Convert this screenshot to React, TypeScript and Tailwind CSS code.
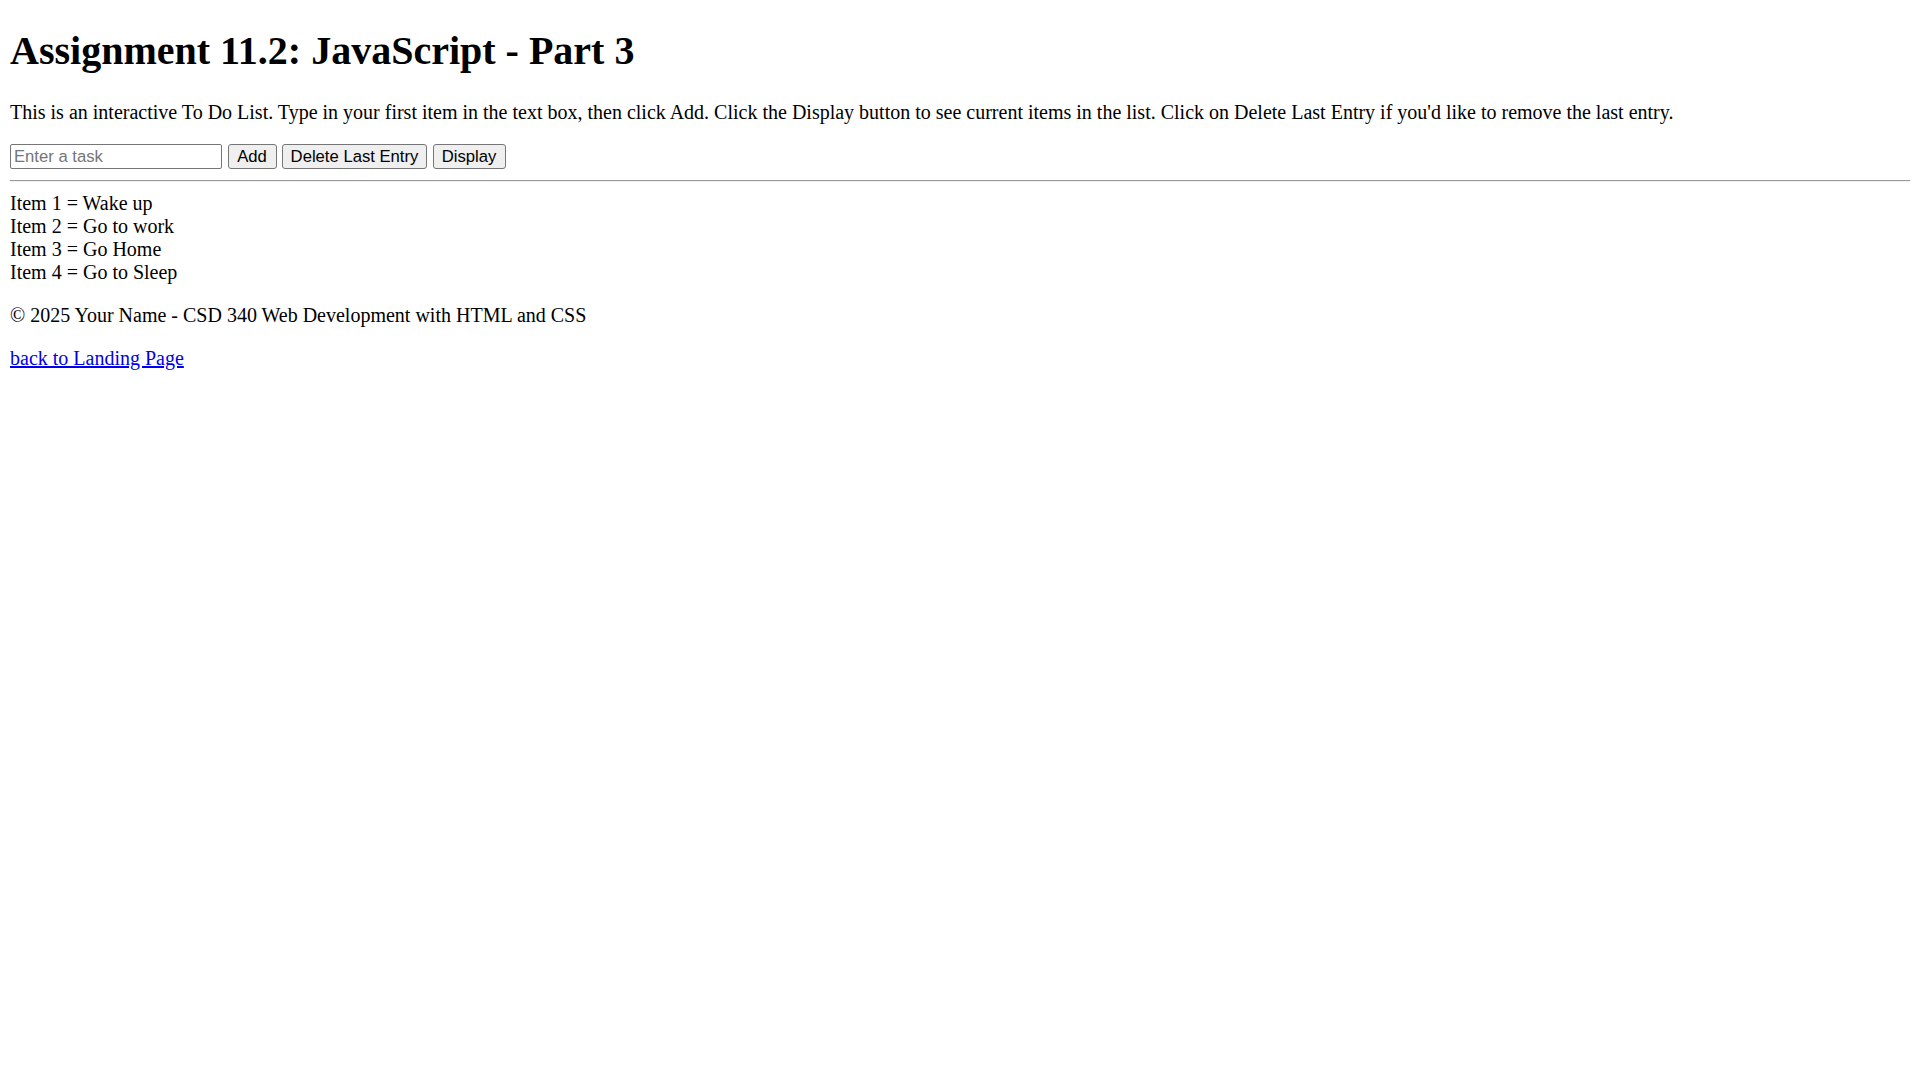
import { useState } from 'react';

const initialItems = ['Wake up', 'Go to work', 'Go Home', 'Go to Sleep'];

export default function App() {
  const [task, setTask] = useState('');
  const [items, setItems] = useState<string[]>(initialItems);
  const [shown, setShown] = useState<string[]>(initialItems);

  const addTask = () => {
    if (!task.trim()) return;
    setItems((list) => [...list, task.trim()]);
    setTask('');
  };

  const deleteLast = () => setItems((list) => list.slice(0, -1));

  const display = () => setShown(items);

  return (
    <div className="min-h-screen bg-white px-[10px] pt-[27.8px] text-[20px] leading-[23px] text-black font-['Liberation_Serif','Times_New_Roman',serif]">
      <h1 className="text-[40px] leading-[46px] font-bold">Assignment 11.2: JavaScript - Part 3</h1>

      <p className="mt-[26.8px]">
        This is an interactive To Do List. Type in your first item in the text box, then click Add. Click the Display
        button to see current items in the list. Click on Delete Last Entry if you'd like to remove the last entry.
      </p>

      {/* controls */}
      <div className="mt-[20.4px] flex h-[25px] items-stretch gap-[5.5px] text-[16.67px] leading-[19px] font-['Liberation_Sans',Arial,sans-serif]">
        <input
          type="text"
          value={task}
          onChange={(e) => setTask(e.target.value)}
          placeholder="Enter a task"
          className="w-[212px] rounded-[2px] border border-[#767676] bg-white px-[3px] text-black outline-none placeholder:text-[#757575]"
        />
        <button
          onClick={addTask}
          className="w-[49px] rounded-[3px] border border-[#767676] bg-[#efefef] text-black"
        >
          Add
        </button>
        <button
          onClick={deleteLast}
          className="w-[145px] rounded-[3px] border border-[#767676] bg-[#efefef] text-black"
        >
          Delete Last Entry
        </button>
        <button
          onClick={display}
          className="w-[73px] rounded-[3px] border border-[#767676] bg-[#efefef] text-black"
        >
          Display
        </button>
      </div>

      <hr className="mt-[11px] border-t border-b border-t-[#9a9a9a] border-b-[#eeeeee]" />

      <div className="mt-[10px]">
        {shown.map((item, i) => (
          <div key={i}>
            Item {i + 1} = {item}
          </div>
        ))}
      </div>

      <p className="mt-[20px]">© 2025 Your Name - CSD 340 Web Development with HTML and CSS</p>

      <p className="mt-[20px]">
        <a href="#" className="text-[#0000ee] underline">
          back to Landing Page
        </a>
      </p>
    </div>
  );
}
